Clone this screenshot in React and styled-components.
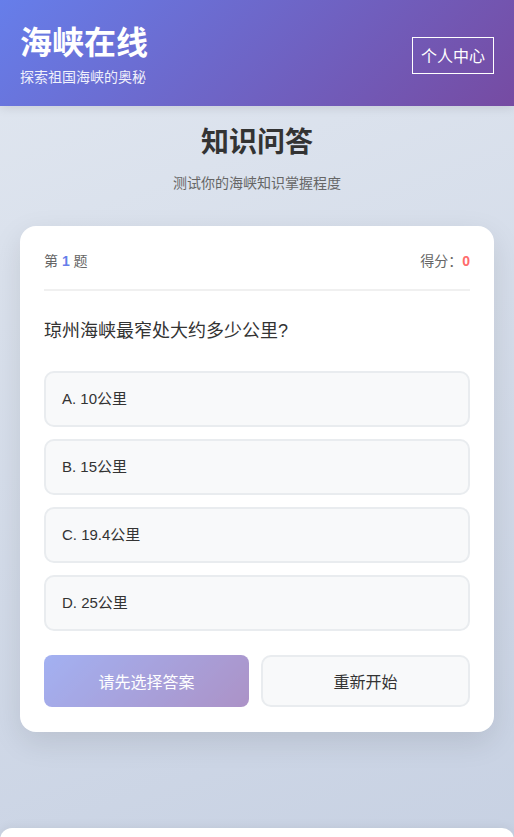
import styled, { createGlobalStyle } from 'styled-components';

const GlobalStyle = createGlobalStyle`
  * { box-sizing: border-box; }
  body {
    margin: 0;
    font-family: "Liberation Sans", "Noto Sans CJK SC", sans-serif;
    background: linear-gradient(160deg, #e1e7f0 0%, #c6d0e2 100%);
    min-height: 100vh;
    color: #333;
  }
`;

const Header = styled.header`
  display: flex;
  align-items: center;
  justify-content: space-between;
  padding: 23px 20px 19px;
  background: linear-gradient(135deg, #667eea 0%, #764ba2 100%);
  color: #fff;
  box-shadow: 0 2px 10px rgba(0, 0, 0, 0.1);
`;

const Brand = styled.div`
  display: flex;
  flex-direction: column;
`;

const BrandTitle = styled.h1`
  margin: 0;
  font-size: 32px;
  line-height: 40px;
  font-weight: 700;
`;

const BrandSub = styled.p`
  margin: 4px 0 0;
  font-size: 14px;
  line-height: 20px;
  opacity: 0.9;
`;

const ProfileButton = styled.button`
  background: transparent;
  border: 1px solid #fff;
  color: #fff;
  font-family: inherit;
  font-size: 16px;
  width: 82px;
  height: 37px;
  padding: 0;
  cursor: pointer;
`;

const Main = styled.main`
  padding: 20px 20px 0;
  min-height: 722px;
`;

const PageTitle = styled.h2`
  margin: 0;
  text-align: center;
  font-size: 28px;
  line-height: 34px;
  font-weight: 700;
  color: #333;
`;

const PageSub = styled.p`
  margin: 13px 0 0;
  text-align: center;
  font-size: 14px;
  line-height: 20px;
  color: #666;
`;

const Card = styled.section`
  margin-top: 33px;
  background: #fff;
  border-radius: 16px;
  padding: 25px 24px;
  box-shadow: 0 10px 30px rgba(0, 0, 0, 0.1);
`;

const CardHead = styled.div`
  display: flex;
  justify-content: space-between;
  align-items: center;
  font-size: 14px;
  line-height: 20px;
  color: #666;
  padding-bottom: 18px;
  border-bottom: 2px solid #f0f0f0;
`;

const Num = styled.strong`
  color: ${({ $tone }) => $tone};
  font-weight: 700;
`;

const Question = styled.h3`
  margin: 26px 0;
  font-size: 18px;
  line-height: 28px;
  font-weight: 400;
  color: #333;
`;

const Options = styled.div`
  display: flex;
  flex-direction: column;
  gap: 12px;
  margin-bottom: 24px;
`;

const Option = styled.button`
  display: block;
  width: 100%;
  text-align: left;
  background: #f8f9fa;
  border: 2px solid #e9ecef;
  border-radius: 10px;
  padding: 16px;
  font-family: inherit;
  font-size: 15px;
  line-height: 20px;
  color: #333;
  cursor: pointer;
`;

const Actions = styled.div`
  display: grid;
  grid-template-columns: 205fr 209fr;
  gap: 12px;
`;

const ActionButton = styled.button`
  height: 52px;
  border-radius: ${({ $primary }) => ($primary ? '8px' : '10px')};
  border: ${({ $primary }) => ($primary ? 'none' : '2px solid #e9ecef')};
  background: ${({ $primary }) =>
    $primary ? 'linear-gradient(135deg, #667eea 0%, #764ba2 100%)' : '#f8f9fa'};
  opacity: ${({ $primary }) => ($primary ? 0.6 : 1)};
  color: ${({ $primary }) => ($primary ? '#fff' : '#333')};
  font-family: inherit;
  font-size: 16px;
  cursor: pointer;
`;

const Footer = styled.footer`
  height: 70px;
  background: #fff;
  border-radius: 12px 12px 0 0;
  box-shadow: 0 -2px 10px rgba(0, 0, 0, 0.05);
`;

const options = ['A. 10公里', 'B. 15公里', 'C. 19.4公里', 'D. 25公里'];

export default function App() {
  return (
    <>
      <GlobalStyle />
      <Header>
        <Brand>
          <BrandTitle>海峡在线</BrandTitle>
          <BrandSub>探索祖国海峡的奥秘</BrandSub>
        </Brand>
        <ProfileButton>个人中心</ProfileButton>
      </Header>
      <Main>
        <PageTitle>知识问答</PageTitle>
        <PageSub>测试你的海峡知识掌握程度</PageSub>
        <Card>
          <CardHead>
            <span>
              第 <Num $tone="#667eea">1</Num> 题
            </span>
            <span>
              得分：<Num $tone="#ff6b6b">0</Num>
            </span>
          </CardHead>
          <Question>琼州海峡最窄处大约多少公里?</Question>
          <Options>
            {options.map((o) => (
              <Option key={o}>{o}</Option>
            ))}
          </Options>
          <Actions>
            <ActionButton $primary disabled>请先选择答案</ActionButton>
            <ActionButton>重新开始</ActionButton>
          </Actions>
        </Card>
      </Main>
      <Footer />
    </>
  );
}
